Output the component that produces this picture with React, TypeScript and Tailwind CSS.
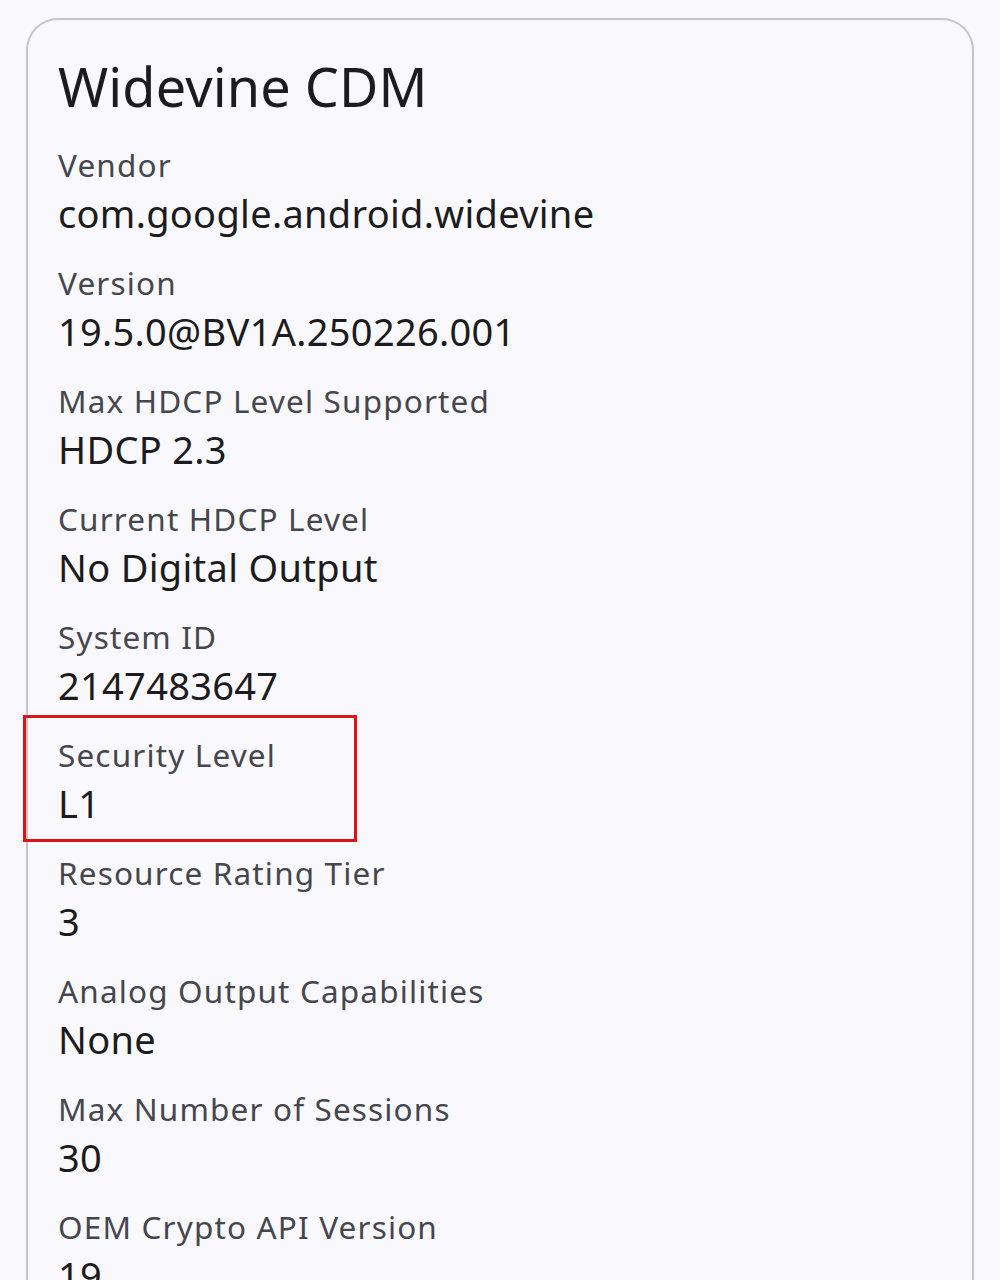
import React from 'react';

const rows: { label: string; value: string; highlight?: boolean }[] = [
    { label: 'Vendor', value: 'com.google.android.widevine' },
    { label: 'Version', value: '19.5.0@BV1A.250226.001' },
    { label: 'Max HDCP Level Supported', value: 'HDCP 2.3' },
    { label: 'Current HDCP Level', value: 'No Digital Output' },
    { label: 'System ID', value: '2147483647' },
    { label: 'Security Level', value: 'L1', highlight: true },
    { label: 'Resource Rating Tier', value: '3' },
    { label: 'Analog Output Capabilities', value: 'None' },
    { label: 'Max Number of Sessions', value: '30' },
    { label: 'OEM Crypto API Version', value: '19' },
];

const App: React.FC = () => {
    return (
        <div
            className="h-[1280px] overflow-hidden bg-[#f9f9fd] px-[26px] pt-[18px]"
            style={{ fontFamily: '"Noto Sans", "Open Sans", sans-serif' }}
        >
            <div className="rounded-t-[32px] border-2 border-b-0 border-[#c5c5ca] bg-[#f9f9fd] px-[30px] pt-[30px] pb-10">
                <h1 className="text-[54px] leading-[72px] text-[#1c1b20] tracking-[0.1px]">Widevine CDM</h1>
                <div className="mt-[20px] flex flex-col gap-[22px]">
                    {rows.map(row => (
                        <div key={row.label} className="relative">
                            <div className="text-[31.5px] leading-[46px] text-[#46464f] tracking-[1.15px]">{row.label}</div>
                            <div className="text-[38px] leading-[50px] text-[#1c1b20] tracking-[0.3px]">{row.value}</div>
                            {row.highlight && (
                                <div className="absolute -left-[35px] -top-[17px] h-[127px] w-[334px] border-[3px] border-[#dc1414]" />
                            )}
                        </div>
                    ))}
                </div>
            </div>
        </div>
    );
};

export default App;
